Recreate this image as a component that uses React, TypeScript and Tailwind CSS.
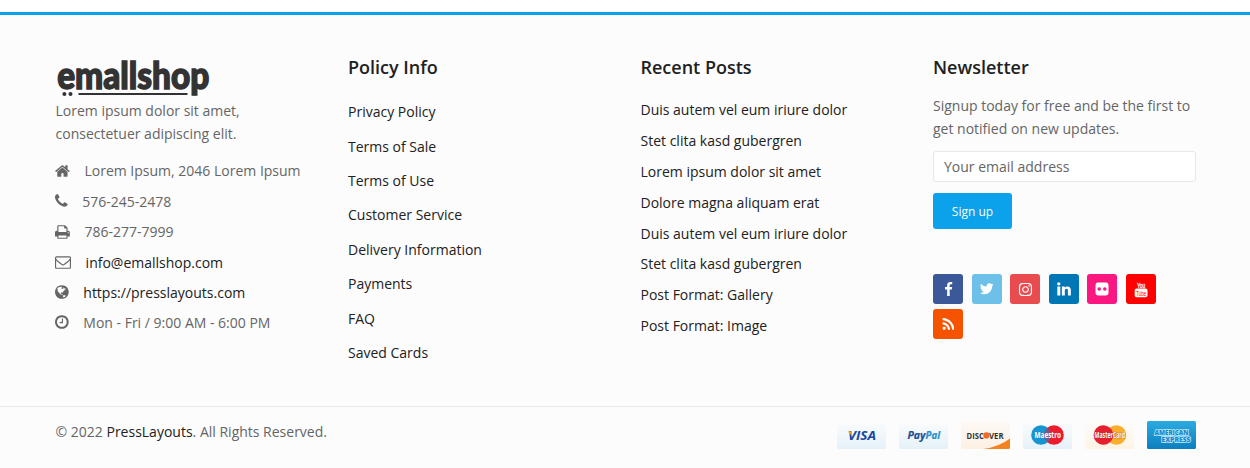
import type { ReactNode } from "react";
import { FaInstagram } from "react-icons/fa";

type GlyphProps = { d: string; box: string; className: string };

const Glyph = ({ d, box, className }: GlyphProps) => (
  <svg viewBox={box} className={`shrink-0 fill-current ${className}`}>
    <path d={d} />
  </svg>
);

const HOME =
  "M1472 992v480q0 26-19 45t-45 19h-384v-384h-256v384h-384q-26 0-45-19t-19-45v-480q0-1 .5-3t.5-3l575-474 575 474q1 2 1 6zm223-69l-62 74q-8 9-21 11h-3q-13 0-21-7l-692-577-692 577q-12 8-24 7-13-2-21-11l-62-74q-8-10-7-23.5t11-21.5l719-599q32-26 76-26t76 26l244 204v-195q0-14 9-23t23-9h192q14 0 23 9t9 23v408l219 182q10 8 11 21.5t-7 23.5z";
const PHONE =
  "M1600 1240q0 27-10 70.5t-21 68.5q-21 50-122 106-94 51-186 51-27 0-53-3.5t-57.5-12.5-47-14.5-55.5-20.5-49-18q-98-35-175-83-127-79-264-216t-216-264q-48-77-83-175-3-9-18-49t-20.5-55.5-14.5-47-12.5-57.5-3.5-53q0-92 51-186 56-101 106-122 25-11 68.5-21t70.5-10q14 0 21 3 18 6 53 76 11 19 30 54t35 63.5 31 53.5q3 4 17.5 25t21.5 35.5 7 28.5q0 20-28.5 50t-62 55-62 53-28.5 46q0 9 5 22.5t8.5 20.5 14 24 11.5 19q76 137 174 235t235 174q2 1 19 11.5t24 14 20.5 8.5 22.5 5q18 0 46-28.5t53-62 55-62 50-28.5q14 0 28.5 7t35.5 21.5 25 17.5q25 15 53.5 31t63.5 35 54 30q70 35 76 53 3 7 3 21z";
const PRINT =
  "M448 1536h896v-256h-896v256zm0-640h896v-384h-160q-40 0-68-28t-28-68v-160h-640v640zm1152 64q0-26-19-45t-45-19-45 19-19 45 19 45 45 19 45-19 19-45zm128 0v416q0 13-9.5 22.5t-22.5 9.5h-224v160q0 40-28 68t-68 28h-960q-40 0-68-28t-28-68v-160h-224q-13 0-22.5-9.5t-9.5-22.5v-416q0-79 56.5-135.5t135.5-56.5h64v-544q0-40 28-68t68-28h672q40 0 88 20t76 48l152 152q28 28 48 76t20 88v256h64q79 0 135.5 56.5t56.5 135.5z";
const ENVELOPE =
  "M1664 1504v-768q-32 36-69 66-268 206-426 338-51 43-83 67t-86.5 48.5-102.5 24.5h-2q-48 0-102.5-24.5t-86.5-48.5-83-67q-158-132-426-338-37-30-69-66v768q0 13 9.5 22.5t22.5 9.5h1472q13 0 22.5-9.5t9.5-22.5zm0-1051v-24.5l-.5-13-3-12.5-5.5-9-9-7.5-14-2.5h-1472q-13 0-22.5 9.5t-9.5 22.5q0 168 147 284 193 152 401 317 6 5 35 29.5t46 37.5 44.5 31.5 50.5 27.5 43 9h2q20 0 43-9t50.5-27.5 44.5-31.5 46-37.5 35-29.5q208-165 401-317 54-43 100.5-115.5t46.5-131.5zm128-37v1088q0 66-47 113t-113 47h-1472q-66 0-113-47t-47-113v-1088q0-66 47-113t113-47h1472q66 0 113 47t47 113z";
const GLOBE =
  "M896 128q209 0 385.5 103t279.5 279.5 103 385.5-103 385.5-279.5 279.5-385.5 103-385.5-103-279.5-279.5-103-385.5 103-385.5 279.5-279.5 385.5-103zm274 521q-2 1-9.5 9.5t-13.5 9.5q2 0 4.5-5t5-11 3.5-7q6-7 22-15 14-6 52-12 34-8 51 11-2-2 9.5-13t14.5-12q3-2 15-4.5t15-7.5l2-22q-12 1-17.5-7t-6.5-21q0 2-6 8 0-7-4.5-8t-11.5 1-9 1q-10-3-15-7.5t-8-16.5-4-15q-2-5-9.5-11t-9.5-10q-1-2-2.5-5.5t-3-6.5-4-5.5-5.5-2.5-7 5-7.5 10-4.5 5q-3-2-6-1.5t-4.5 1-4.5 3-5 3.5q-3 2-8.5 3t-8.5 2q15-5-1-11-10-4-16-3 9-4 7.5-12t-8.5-14h5q-1-4-8.5-8.5t-17.5-8.5-13-6q-8-5-34-9.5t-33-.5q-5 6-4.5 10.5t4 14 3.5 12.5q1 6-5.5 13t-6.5 12q0 7 14 15.5t10 21.5q-3 8-16 16t-16 12q-5 8-1.5 18.5t10.5 16.5q2 2 1.5 4t-3.5 4.5-5.5 4-6.5 3.5l-3 2q-11 5-20.5-6t-13.5-26q-7-25-16-30-23-8-29 1-5-13-41-26-25-9-58-4 6-1 0-15-7-15-19-12 3-6 4-17.5t1-13.5q3-13 12-23 1-1 7-8.5t9.5-13.5.5-6q35 4 50-11 5-5 11.5-17t10.5-17q9-6 14-5.5t14.5 5.5 14.5 5q14 1 15.5-11t-7.5-20q12 1 3-17-4-7-8-9-12-4-27 5-8 4 2 8-1-1-9.5 10.5t-16.5 17.5-16-5q-1-1-5.5-13.5t-9.5-13.5q-8 0-16 15 3-8-11-15t-24-8q19-12-8-27-7-4-20.5-5t-19.5 4q-5 7-5.5 11.5t5 8 10.5 5.5 11.5 4 8.5 3q14 10 8 14-2 1-8.5 3.5t-11.5 4.5-6 4q-3 4 0 14t-2 14q-5-5-9-17.5t-7-16.5q7 9-25 6l-10-1q-4 0-16 2t-20.5 1-13.5-8q-4-8 0-20 1-4 4-2-4-3-11-9.5t-10-8.5q-46 15-94 41 6 1 12-1 5-2 13-6.5t10-5.5q34-14 42-7l5-5q14 16 20 25-7-4-30-1-20 6-22 12 7 12 5 18-4-3-11.5-10t-14.5-11-15-5q-16 0-22 1-146 80-235 222 7 7 12 8 4 1 5 9t2.5 11 11.5-3q9 8 3 19 1-1 44 27 19 17 21 21 3 11-10 18-1-2-9-9t-9-4q-3 5 .5 18.5t10.5 12.5q-7 0-9.5 16t-2.5 35.5-1 23.5l2 1q-3 12 5.5 34.5t21.5 19.5q-13 3 20 43 6 8 8 9 3 2 12 7.5t15 10 10 10.5q4 5 10 22.5t14 23.5q-2 6 9.5 20t10.5 23q-1 0-2.5 1t-2.5 1q3 7 15.5 14t15.5 13q1 3 2 10t3 11 8 2q2-20-24-62-15-25-17-29-3-5-5.5-15.5t-4.5-14.5q2 0 6 1.5t8.5 3.5 7.5 4 2 3q-3 7 2 17.5t12 18.5 17 19 12 13q6 6 14 19.5t0 13.5q9 0 20 10t17 20q5 8 8 26t5 24q2 7 8.5 13.5t12.5 9.5l16 8 13 7q5 2 18.5 10.5t21.5 11.5q10 4 16 4t14.5-2.5 13.5-3.5q15-2 29 15t21 21q36 19 55 11-2 1 .5 7.5t8 15.5 9 14.5 5.5 8.5q5 6 18 15t18 15q6-4 7-9-3 8 7 20t18 10q14-3 14-32-31 15-49-18 0-1-2.5-5.5t-4-8.5-2.5-8.5 0-7.5 5-3q9 0 10-3.5t-2-12.5-4-13q-1-8-11-20t-12-15q-5 9-16 8t-16-9q0 1-1.5 5.5t-1.5 6.5q-13 0-15-1 1-3 2.5-17.5t3.5-22.5q1-4 5.5-12t7.5-14.5 4-12.5-4.5-9.5-17.5-2.5q-19 1-26 20-1 3-3 10.5t-5 11.5-9 7q-7 3-24 2t-24-5q-13-8-22.5-29t-9.5-37q0-10 2.5-26.5t3-25-5.5-24.5q3-2 9-9.5t10-10.5q2-1 4.5-1.5t4.5 0 4-1.5 3-6q-1-1-4-3-3-3-4-3 7 3 28.5-1.5t27.5 1.5q15 11 22-2 0-1-2.5-9.5t-.5-13.5q5 27 29 9 3 3 15.5 5t17.5 5q3 2 7 5.5t5.5 4.5 5-.5 8.5-6.5q10 14 12 24 11 40 19 44 7 3 11 2t4.5-9.5 0-14-1.5-12.5l-1-8v-18l-1-8q-15-3-18.5-12t1.5-18.5 15-18.5q1-1 8-3.5t15.5-6.5 12.5-8q21-19 15-35 7 0 11-9-1 0-5-3t-7.5-5-4.5-2q9-5 2-16 5-3 7.5-11t7.5-10q9 12 21 2 8-8 1-16 5-7 20.5-10.5t18.5-9.5q7 2 8-2t1-12 3-12q4-5 15-9t13-5l17-11q3-4 0-4 18 2 31-11 10-11-6-20 3-6-3-9.5t-15-5.5q3-1 11.5-.5t10.5-1.5q15-10-7-16-17-5-43 12zm-163 877q206-36 351-189-3-3-12.5-4.5t-12.5-3.5q-18-7-24-8 1-7-2.5-13t-8-9-12.5-8-11-7q-2-2-7-6t-7-5.5-7.5-4.5-8.5-2-10 1l-3 1q-3 1-5.5 2.5t-5.5 3-4 3 0 2.5q-21-17-36-22-5-1-11-5.5t-10.5-7-10-1.5-11.5 7q-5 5-6 15t-2 13q-7-5 0-17.5t2-18.5q-3-6-10.5-4.5t-12 4.5-11.5 8.5-9 6.5-8.5 5.5-8.5 7.5q-3 4-6 12t-5 11q-2-4-11.5-6.5t-9.5-5.5q2 10 4 35t5 38q7 31-12 48-27 25-29 40-4 22 12 26 0 7-8 20.5t-7 21.5q0 6 2 16z";
const CLOCK =
  "M1024 544v448q0 14-9 23t-23 9h-320q-14 0-23-9t-9-23v-64q0-14 9-23t23-9h224v-352q0-14 9-23t23-9h64q14 0 23 9t9 23zm416 352q0-148-73-273t-198-198-273-73-273 73-198 198-73 273 73 273 198 198 273 73 273-73 198-198 73-273zm224 0q0 209-103 385.5t-279.5 279.5-385.5 103-385.5-103-279.5-279.5-103-385.5 103-385.5 279.5-279.5 385.5-103 385.5 103 279.5 279.5 103 385.5z";
const FACEBOOK =
  "M1343 12v264h-157q-86 0-116 36t-30 108v189h293l-39 296h-254v759h-306v-759h-255v-296h255v-218q0-186 104-288.5t277-102.5q147 0 228 12z";
const TWITTER =
  "M1684 408q-67 98-162 167 1 14 1 42 0 130-38 259.5t-115.5 248.5-184.5 210.5-258 146-323 54.5q-271 0-496-145 35 4 78 4 225 0 401-138-105-2-188-64.5t-114-159.5q33 5 61 5 43 0 85-11-112-23-185.5-111.5t-73.5-205.5v-4q68 38 146 41-66-44-105-115t-39-154q0-88 44-163 121 149 294.5 238.5t371.5 99.5q-8-38-8-74 0-134 94.5-228.5t228.5-94.5q140 0 236 102 109-21 205-78-37 115-142 178 93-10 186-50z";
const LINKEDIN =
  "M477 625v991h-330v-991h330zm21-306q1 73-50.5 122t-135.5 49h-2q-82 0-132-49t-50-122q0-74 51.5-122.5t134.5-48.5 133 48.5 51 122.5zm1166 729v568h-329v-530q0-105-40.5-164.5t-126.5-59.5q-63 0-105.5 34.5t-63.5 85.5q-11 30-11 81v553h-329q2-399 2-647t-1-296l-1-48h329v144h-2q20-32 41-56t56.5-52 87-43.5 114.5-15.5q171 0 275 113.5t104 332.5z";
const RSS =
  "M576 1344q0 80-56 136t-136 56-136-56-56-136 56-136 136-56 136 56 56 136zm512 123q2 28-17 48-18 21-47 21h-135q-25 0-43-16.5t-20-41.5q-22-229-184.5-391.5t-391.5-184.5q-25-2-41.5-20t-16.5-43v-135q0-29 21-47 17-17 43-17h5q160 13 306 80.5t259 181.5q114 113 181.5 259t80.5 306zm512 2q2 27-18 47-18 20-46 20h-143q-26 0-44.5-17.5t-19.5-42.5q-12-215-101-408.5t-231.5-336-336-231.5-408.5-102q-25-1-42.5-19.5t-17.5-43.5v-143q0-28 20-46 18-18 44-18h3q262 13 501.5 120t425.5 294q187 186 294 425.5t120 501.5z";

const contacts = [
  { d: HOME, box: "64 0 1664 1792", w: "h-4 w-[14.86px]", text: "Lorem Ipsum, 2046 Lorem Ipsum", h: "h-[31px]" },
  { d: PHONE, box: "192 0 1408 1792", w: "h-4 w-[12.57px]", text: "576-245-2478", h: "h-[30px]" },
  { d: PRINT, box: "64 0 1664 1792", w: "h-4 w-[14.86px]", text: "786-277-7999", h: "h-[31px]" },
  { d: ENVELOPE, box: "0 0 1792 1792", w: "h-4 w-4", text: "info@emallshop.com", link: true, h: "h-[30px]" },
  { d: GLOBE, box: "128 0 1536 1792", w: "h-4 w-[13.71px]", text: "https://presslayouts.com", link: true, h: "h-[30px]" },
  { d: CLOCK, box: "128 0 1536 1792", w: "h-4 w-[13.71px]", text: "Mon - Fri / 9:00 AM - 6:00 PM", h: "h-[30px]" },
];

const policies = [
  "Privacy Policy",
  "Terms of Sale",
  "Terms of Use",
  "Customer Service",
  "Delivery Information",
  "Payments",
  "FAQ",
  "Saved Cards",
];

const posts = [
  "Duis autem vel eum iriure dolor",
  "Stet clita kasd gubergren",
  "Lorem ipsum dolor sit amet",
  "Dolore magna aliquam erat",
  "Duis autem vel eum iriure dolor",
  "Stet clita kasd gubergren",
  "Post Format: Gallery",
  "Post Format: Image",
];

const Social = ({ color, children }: { color: string; children: ReactNode }) => (
  <a className={`flex size-[30px] items-center justify-center rounded-[3px] text-white ${color}`}>{children}</a>
);

const Logo = () => (
  <svg width="156" height="42" className="-mt-0.5 block overflow-visible" aria-label="emallshop">
    <text
      x="1.2"
      y="33"
      fontFamily="Lato"
      fontWeight="900"
      fontSize="38.5"
      fill="#333"
      stroke="#333"
      strokeWidth="1.5"
      textLength="152"
      lengthAdjust="spacingAndGlyphs"
    >
      emallshop
    </text>
    <circle cx="8.4" cy="38" r="2" fill="#333" />
    <circle cx="14.5" cy="38" r="2" fill="#333" />
    <rect x="22.5" y="37" width="109" height="2" fill="#333" />
  </svg>
);

const Title = ({ children }: { children: ReactNode }) => (
  <h3 className="text-[18px] leading-6 font-semibold text-[#212121]">{children}</h3>
);

const Card = ({ id, from, to, children }: { id: string; from: string; to: string; children: ReactNode }) => (
  <svg width="49" height="28" viewBox="0 0 49 28" fontFamily="Open Sans" fontWeight="800">
    <defs>
      <linearGradient id={id} x1="0" y1="0" x2="0" y2="1">
        <stop offset="0" stopColor={from} />
        <stop offset="1" stopColor={to} />
      </linearGradient>
    </defs>
    <rect width="49" height="28" rx="1.5" fill={`url(#${id})`} />
    {children}
  </svg>
);

export default function App() {
  return (
    <div className="h-[468px] overflow-hidden bg-white pt-3 font-['Open_Sans',sans-serif] text-[14px] leading-[23px] text-[#656565]">
      <footer className="flex h-[456px] flex-col border-t-[3px] border-[#0ca1eb] bg-[#fcfcfc]">
        <div className="ml-[40.5px] grid h-[391px] w-[1170px] grid-cols-4">
          <section className="px-[15px] pt-[43px]">
            <Logo />
            <p className="mt-[1px]">
              Lorem ipsum dolor sit amet,
              <br />
              consectetuer adipiscing elit.
            </p>
            <ul className="-ml-[0.5px] mt-[10px]">
              {contacts.map((c) => (
                <li key={c.text} className={`flex items-center gap-[14.6px] whitespace-nowrap ${c.h}`}>
                  <Glyph d={c.d} box={c.box} className={c.w} />
                  <span className={c.link ? "text-[#212121]" : ""}>{c.text}</span>
                </li>
              ))}
            </ul>
          </section>

          <section className="px-[15px] pt-10">
            <Title>Policy Info</Title>
            <ul className="mt-[15.6px] text-[#212121]">
              {policies.map((p) => (
                <li key={p} className="flex h-[34.4px] items-center">
                  {p}
                </li>
              ))}
            </ul>
          </section>

          <section className="px-[15px] pt-10">
            <Title>Recent Posts</Title>
            <ul className="mt-[15.5px] text-[#212121]">
              {posts.map((p, i) => (
                <li key={i} className="flex h-[30.8px] items-center">
                  {p}
                </li>
              ))}
            </ul>
          </section>

          <section className="px-[15px] pt-10">
            <Title>Newsletter</Title>
            <p className="mt-[15px] whitespace-nowrap">
              Signup today for free and be the first to
              <br />
              get notified on new updates.
            </p>
            <input
              type="text"
              placeholder="Your email address"
              className="mt-[11px] block h-[31px] w-full rounded-[3px] border border-[#e5e8ec] bg-white px-[10px] text-[14px] placeholder:text-[#656565]"
            />
            <button className="mt-[11px] block h-9 w-[79px] rounded-[3px] bg-[#0ca1eb] text-[12px] font-medium text-white">
              Sign up
            </button>
            <div className="mt-[45px] flex w-[240px] flex-wrap gap-x-[8.6px] gap-y-[5px]">
              <Social color="bg-[#3b5998]">
                <Glyph d={FACEBOOK} box="0 0 1792 1792" className="size-[15px]" />
              </Social>
              <Social color="bg-[#6dc0e8]">
                <Glyph d={TWITTER} box="0 0 1792 1792" className="size-[15.5px]" />
              </Social>
              <Social color="bg-[#e84c4f]">
                <FaInstagram className="size-[15px]" />
              </Social>
              <Social color="bg-[#0077b5]">
                <Glyph d={LINKEDIN} box="0 0 1792 1792" className="size-4" />
              </Social>
              <Social color="bg-[#fa1780]">
                <svg viewBox="0 0 16 16" className="size-4">
                  <rect x="1.5" y="1.5" width="13" height="13" rx="2.4" fill="#fff" />
                  <circle cx="5.2" cy="8" r="1.8" fill="#fa1780" />
                  <circle cx="10.8" cy="8" r="1.8" fill="#fa1780" />
                </svg>
              </Social>
              <Social color="bg-[#ff0000]">
                <svg viewBox="0 0 30 30" className="size-[30px]" fontFamily="Liberation Sans">
                  <text x="10.9" y="13.8" fontSize="8" fill="#fff" stroke="#fff" strokeWidth="0.3" textLength="8.2" lengthAdjust="spacingAndGlyphs">
                    You
                  </text>
                  <rect x="8.7" y="14.6" width="12.8" height="8.6" rx="1.8" fill="#fff" />
                  <text x="9.9" y="21.8" fontSize="8" fill="#f00" textLength="10.6" lengthAdjust="spacingAndGlyphs">
                    Tube
                  </text>
                </svg>
              </Social>
              <Social color="bg-[#f55300]">
                <Glyph d={RSS} box="128 0 1536 1792" className="h-[15px] w-[12.86px]" />
              </Social>
            </div>
          </section>
        </div>

        <div className="flex-1 border-t border-[#e5e8ec]">
          <div className="ml-[40.5px] flex w-[1170px] justify-between px-[15px]">
            <p className="pt-[13px]">
              © 2022 <a className="text-[#212121]">PressLayouts</a>. All Rights Reserved.
            </p>
            <div className="flex gap-[13px] pt-[14px]">
              <Card id="visa" from="#fbfcfd" to="#e5f1f8">
                <text x="11" y="18.8" fontSize="11.5" fontStyle="italic" fontWeight="700" fill="#17479e" textLength="28" lengthAdjust="spacingAndGlyphs">
                  VISA
                </text>
                <path d="M10.5 10.4h3.6l1.3 4.6z" fill="#f5a623" />
              </Card>
              <Card id="paypal" from="#fbfcfd" to="#e5f1f8">
                <g fontSize="10.5" fontStyle="italic" fontWeight="700">
                  <text x="8.5" y="18" fill="#1f4f8f" stroke="#1f4f8f" strokeWidth="0.2" textLength="18" lengthAdjust="spacingAndGlyphs">
                    Pay
                  </text>
                  <text x="26.5" y="18" fill="#2790c8" stroke="#2790c8" strokeWidth="0.2" textLength="14.5" lengthAdjust="spacingAndGlyphs">
                    Pal
                  </text>
                </g>
              </Card>
              <Card id="discover" from="#fdf9f5" to="#fdf0e4">
                <path d="M22 28Q38 26 49 17.5V26.5Q49 28 47.5 28z" fill="#f5821f" />
                <g fontSize="9.4" fontWeight="700" fill="#333">
                  <text x="5.6" y="17.8" textLength="17.2" lengthAdjust="spacingAndGlyphs">
                    DISC
                  </text>
                  <text x="28" y="17.8" textLength="14.6" lengthAdjust="spacingAndGlyphs">
                    VER
                  </text>
                </g>
                <circle cx="25.4" cy="14.4" r="3.1" fill="#f26a21" />
              </Card>
              <Card id="maestro" from="#fbfcfd" to="#e5f1f8">
                <circle cx="18" cy="14" r="9.8" fill="#1795d2" />
                <circle cx="31" cy="14" r="9.8" fill="#ec1c2e" />
                <path d="M24.5 6.7a9.8 9.8 0 0 1 0 14.6a9.8 9.8 0 0 1 0-14.6z" fill="#6d5c8e" />
                <text x="11.5" y="17" fontSize="8" fontWeight="700" fill="#fff" textLength="26.5" lengthAdjust="spacingAndGlyphs">
                  Maestro
                </text>
              </Card>
              <Card id="mastercard" from="#fdfcfa" to="#fef4e4">
                <circle cx="31.4" cy="14" r="9.8" fill="#fbae2c" />
                <path d="M24.9 6.7a9.8 9.8 0 1 0 0 14.6a9.8 9.8 0 0 0 0-14.6z" fill="#e5202e" />
                <text x="9.5" y="17" fontSize="8" fontWeight="700" fill="#fff" stroke="#a8262c" strokeWidth="0.6" paintOrder="stroke" textLength="30.5" lengthAdjust="spacingAndGlyphs">
                  MasterCard
                </text>
              </Card>
              <Card id="amex" from="#2babe0" to="#0c7fc0">
                <g fontSize="6.5" fill="#1a86c8" stroke="#c4e9fa" strokeWidth="1.5" paintOrder="stroke">
                  <text x="7.5" y="14" textLength="34" lengthAdjust="spacingAndGlyphs">
                    AMERICAN
                  </text>
                  <text x="14.5" y="21.3" textLength="29" lengthAdjust="spacingAndGlyphs">
                    EXPRESS
                  </text>
                </g>
              </Card>
            </div>
          </div>
        </div>
      </footer>
    </div>
  );
}
